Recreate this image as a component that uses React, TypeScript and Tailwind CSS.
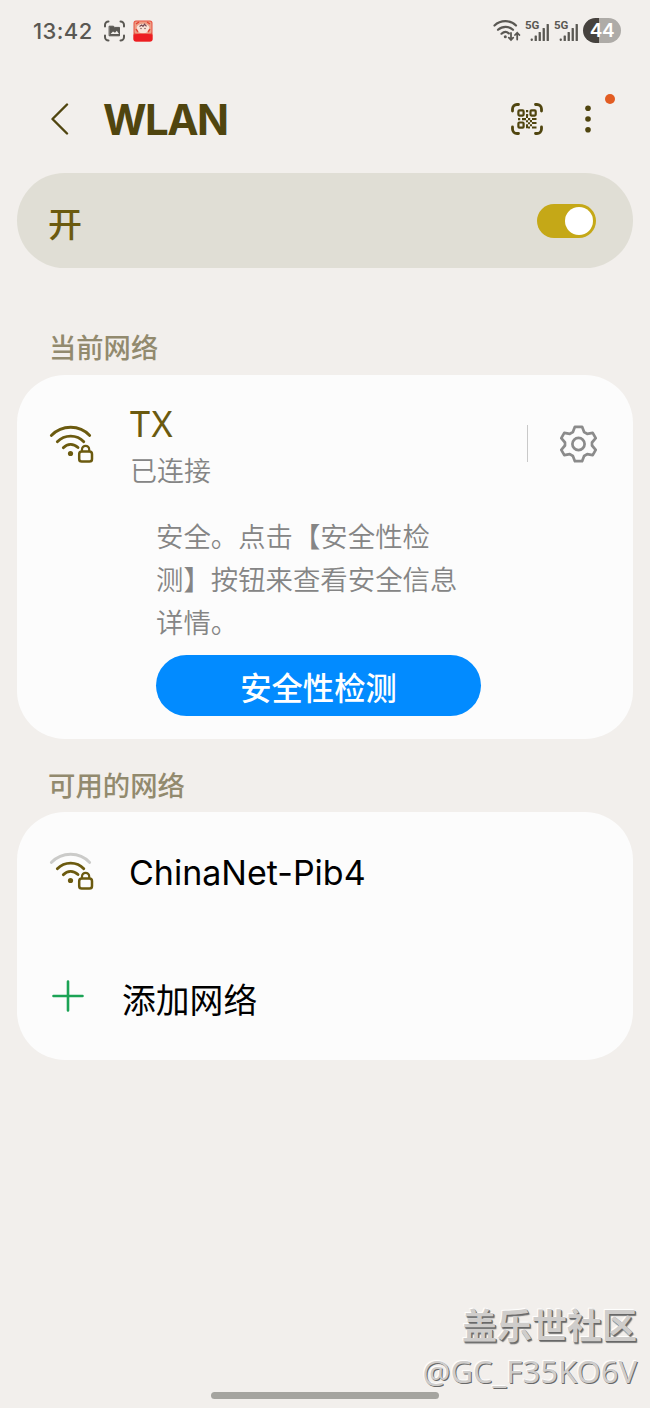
import React, { useState } from "react";

const cjk = "font-['Noto_Sans_CJK_SC',sans-serif]";

// wifi arcs + little lock, the outer arc goes grey when the signal is weak
function WifiLock({ weak = false }: { weak?: boolean }) {
  return (
    <svg width="46" height="40" viewBox="0 0 46 40" fill="none" stroke="#6b5a0f" strokeWidth="2.8" strokeLinecap="round">
      <path d="M2.3 11.5C13 0.5 30.5 0.5 40.7 11.5" stroke={weak ? "#cbcbc9" : "#6b5a0f"} />
      <path d="M8.3 17.8C15.5 10.2 28 10.2 34.8 17.8" />
      <path d="M14.3 23.8C18.5 19.2 24.5 19.2 29 23.5" />
      <circle cx="21.5" cy="29.5" r="2.6" fill="#6b5a0f" stroke="none" />
      <rect x="30.2" y="27.6" width="12.8" height="10" rx="2.6" strokeWidth="2.5" />
      <path d="M33 27.2v-1.8a3.6 3.6 0 0 1 7.2 0v1.8" strokeWidth="2.2" />
    </svg>
  );
}

function Signal() {
  return (
    <div className="relative h-6 w-6">
      <span className="absolute -left-0.5 top-[1px] font-['Roboto',sans-serif] text-[11.5px] leading-none font-bold">5G</span>
      <svg width="24" height="24" viewBox="0 0 24 24" fill="currentColor">
        <rect x="3.6" y="19.6" width="2.3" height="2.3" rx="0.8" />
        <rect x="7.6" y="16.5" width="2.3" height="5.5" rx="0.6" />
        <rect x="11.6" y="13" width="2.3" height="9" rx="0.6" />
        <rect x="15.6" y="9" width="2.3" height="13" rx="0.6" />
        <rect x="19.6" y="5" width="2.3" height="17" rx="0.6" />
      </svg>
    </div>
  );
}

function StatusBar() {
  return (
    <div className="flex h-[61px] items-center pl-[33px] pr-[29px] text-[#5a5853]">
      <span className="w-[70px] text-[22px] leading-none font-medium tracking-[0.4px]">13:42</span>

      <svg width="23" height="22" viewBox="0 0 23 22" fill="none" stroke="currentColor" strokeWidth="2" strokeLinecap="round">
        <path d="M2 6.5V5a3.5 3.5 0 0 1 3.5-3.5M17.5 1.5A3.5 3.5 0 0 1 21 5v1.5M2 15.5V17a3.5 3.5 0 0 0 3.5 3.5M17.5 20.5A3.5 3.5 0 0 0 21 17v-1.5" />
        <path d="M6.5 6.2h4l1 1.2h5v8.4h-10z" fill="currentColor" stroke="currentColor" strokeWidth="1" />
        <path d="M7.5 14l2.5-2.6 2 1.4 1.8-2 2.2 3.2z" fill="#f2efec" stroke="none" />
      </svg>

      <svg className="ml-[7px]" width="20" height="22" viewBox="0 0 20 22">
        <rect x="0.5" y="0.5" width="19" height="21" rx="2.5" fill="#e9503e" />
        <rect x="1.5" y="1.5" width="17" height="12" rx="1.5" fill="#ed9e86" />
        <ellipse cx="10" cy="8.5" rx="6.5" ry="4.8" fill="#f9e3d8" />
        <path d="M3 4l3-2M14 2l3 2M3 9l2 3M17 9l-2 3" stroke="#e24334" strokeWidth="1.4" />
        <path d="M6.5 6.5l2.2-1.4 1.3 1.3 1.5-2.2 2 2.2" fill="none" stroke="#73434d" strokeWidth="1.2" />
        <circle cx="8" cy="8.5" r="0.7" fill="#6e4246" />
        <circle cx="12" cy="8.5" r="0.7" fill="#6e4246" />
        <path d="M0.5 14.5q9.5-1.5 19 0V19a2.5 2.5 0 0 1-2.5 2.5H3A2.5 2.5 0 0 1 .5 19z" fill="#ed1d22" />
      </svg>

      <svg className="ml-auto" width="28" height="22" viewBox="0 0 28 22" fill="none" stroke="currentColor" strokeWidth="2.2" strokeLinecap="round">
        <path d="M1.5 5.5C7.5 -0.3 17.5 -0.3 23 5.5" />
        <path d="M5 9.8c4.4-4 10.8-4 15 0" />
        <path d="M8.5 13.7c2.4-2.2 5.3-2.2 7.3-.3" />
        <circle cx="12.3" cy="16.8" r="1.5" fill="currentColor" stroke="none" />
        <path d="M18 13v6.7M15.8 17.6l2.2 2.3 2.2-2.3M24.2 19.5v-6.7M22 15l2.2-2.3 2.2 2.3" strokeWidth="1.8" />
      </svg>
      <div className="ml-[6px] flex gap-[5px]">
        <Signal />
        <Signal />
      </div>
      <div className="ml-[3px] flex h-[25px] w-[38px] items-center justify-center rounded-full bg-[linear-gradient(90deg,#46423e_43%,#aeaba7_43%)] text-[19px] leading-none font-semibold tracking-[-0.5px] text-white">
        44
      </div>
    </div>
  );
}

function Header() {
  return (
    <div className="flex h-28 items-center pt-1 pl-[50px] pr-[58px] text-[#50450f]">
      <svg width="20" height="32" viewBox="0 0 20 32" fill="none" stroke="currentColor" strokeWidth="2.4" strokeLinecap="round" strokeLinejoin="round">
        <path d="M17 1.5L2.5 16 17 30.5" />
      </svg>
      <h1 className="ml-[33px] pt-px text-[42px] leading-none font-bold tracking-[-1.6px]">WLAN</h1>

      <svg className="ml-auto" width="32" height="32" viewBox="0 0 32 32" fill="none" stroke="currentColor" strokeWidth="2.8" strokeLinecap="round">
        <path d="M1.5 8V6A4.5 4.5 0 0 1 6 1.5h1.5M24.5 1.5H26A4.5 4.5 0 0 1 30.5 6v2M1.5 24v2A4.5 4.5 0 0 0 6 30.5h1.5M24.5 30.5H26a4.5 4.5 0 0 0 4.5-4.5v-2" />
        <g strokeWidth="2.2">
          <rect x="7.4" y="7.4" width="5.2" height="5.2" rx="1" />
          <rect x="19.5" y="7.4" width="5.2" height="5.2" rx="1" />
          <rect x="7.4" y="19.5" width="5.2" height="5.2" rx="1" />
        </g>
        <g fill="currentColor" stroke="none">
          <path d="M15 7h2.2v2.2H15zM15 11h2.2v2.2H15zM7 15h2.2v2.2H7zM11 15h4v2.2h-4zM15 13h2v2h-2zM17 15h2.2v2.2H17zM21 15h4.5v2H21zM19 17h2v2.2h-2zM15 17.2h2v2h-2zM17 19.2h2v2h-2zM21 19h4.5v2H21zM15 21.2h2v4h-2zM19 21.2h2v2h-2zM21 23.5h4.5v2H21zM17 23.5h2v2h-2z" />
        </g>
      </svg>

      <div className="relative ml-[42px]">
        <svg width="7" height="28" viewBox="0 0 7 28" fill="currentColor">
          <circle cx="3" cy="3.3" r="2.8" />
          <circle cx="3" cy="14" r="2.8" />
          <circle cx="3" cy="24.7" r="2.8" />
        </svg>
        <span className="absolute -top-[11px] left-[20px] h-2.5 w-2.5 rounded-full bg-[#e25c22]" />
      </div>
    </div>
  );
}

export default function App() {
  const [enabled, setEnabled] = useState(true);

  return (
    <div className="relative flex h-[1408px] w-[650px] flex-col overflow-hidden bg-[#f2efec] font-['Inter','Noto_Sans_CJK_SC',sans-serif]">
      <StatusBar />
      <Header />

      {/* master switch */}
      <div className="mx-[17px] flex h-[95px] items-center justify-between rounded-full bg-[#e0ded5] pl-[31px] pr-[37px]">
        <span className={`${cjk} pt-[5px] text-[34px] leading-none font-medium text-[#6b5a0f]`}>开</span>
        <button
          onClick={() => setEnabled(!enabled)}
          className={`flex h-[34px] w-[59px] items-center rounded-full px-[3px] ${enabled ? "justify-end bg-[#c5a817]" : "justify-start bg-[#aaa79c]"}`}
        >
          <span className="h-7 w-7 rounded-full bg-white" />
        </button>
      </div>

      {/* current network */}
      <h2 className={`${cjk} mt-[59px] flex h-12 items-center pb-2 pl-[49px] text-[27.3px] leading-none font-medium text-[#928a6e]`}>当前网络</h2>
      <div className="mx-[17px] h-[364px] rounded-[48px] bg-[#fcfcfc]">
        <div className="flex h-[134px] items-center pl-8 pr-9 pt-[3px]">
          <WifiLock />
          <div className="ml-[35px] pt-[5px]">
            <div className="font-['Noto_Sans',sans-serif] text-[36px] leading-[48px] tracking-[1.5px] text-[#6b5a0f]">TX</div>
            <div className={`${cjk} text-[27px] leading-[44px] font-[350] text-[#858585]`}>已连接</div>
          </div>
          <div className="ml-auto h-[37px] w-px bg-[#c9c9c9]" />
          <svg className="ml-8" width="37" height="38" viewBox="0 0 37 38" fill="none" stroke="#8b8b8b" strokeWidth="2.7" strokeLinejoin="round">
            <path d="M14.9 1.8h7.2l2 5.2 3.1 1.8 5.5-1 3 5.4-3.7 4.3v3l3.7 4.3-3 5.4-5.5-1-3.1 1.8-2 5.2h-7.2l-2-5.2-3.1-1.8-5.5 1-3-5.4 3.7-4.3v-3l-3.7-4.3 3-5.4 5.5 1 3.1-1.8z" />
            <circle cx="18.5" cy="19" r="6.1" />
          </svg>
        </div>

        <div className="ml-[139px] w-[325px]">
          <p className={`${cjk} pt-[5px] text-[27.4px] leading-[42.8px] font-[350] text-[#858585]`}>
            安全。点击【安全性检
            <br />
            测】按钮来查看安全信息
            <br />
            详情。
          </p>
          <button className={`${cjk} mt-[13px] flex h-[61px] w-full items-center justify-center rounded-full bg-[#028bff] pt-px text-[31.3px] leading-none font-medium text-white`}>
            安全性检测
          </button>
        </div>
      </div>

      {/* available networks */}
      <h2 className={`${cjk} mt-[21px] flex h-[52px] items-center pb-[3px] pl-[48px] text-[27.4px] leading-none font-medium text-[#928a6e]`}>可用的网络</h2>
      <div className="mx-[17px] h-[248px] rounded-[48px] bg-[#fcfcfc]">
        <div className="flex h-[118px] items-center pl-8">
          <WifiLock weak />
          <span className="ml-[34px] pt-1 text-[34px] leading-none text-black">ChinaNet-Pib4</span>
        </div>
        <div className="flex h-[132px] items-center pl-[35px]">
          <svg width="32" height="32" viewBox="0 0 32 32" stroke="#1ba355" strokeWidth="2.6" strokeLinecap="round">
            <path d="M16 1.5v29M1.5 16h29" />
          </svg>
          <span className={`${cjk} ml-[38px] pt-[5px] text-[33.8px] leading-none text-black`}>添加网络</span>
        </div>
      </div>

      {/* community watermark */}
      <div className="mt-auto flex flex-col items-end pr-[13px] pb-[14px] text-[#cfcdcb]">
        <span className={`${cjk} text-[35px] leading-[49px] font-bold [text-shadow:1px_1px_0_#686868,1.5px_1.5px_1px_#777777,-1px_-1px_1px_#ffffff]`}>盖乐世社区</span>
        <span className="font-['Noto_Sans',sans-serif] text-[31px] leading-[46px] [text-shadow:1px_1px_0_#686868,-1px_-1px_1px_#ffffff]">@GC_F35KO6V</span>
      </div>

      {/* gesture handle */}
      <div className="absolute bottom-[9px] left-[211px] h-[7px] w-[228px] rounded-full bg-[#a5a49f]" />
    </div>
  );
}
